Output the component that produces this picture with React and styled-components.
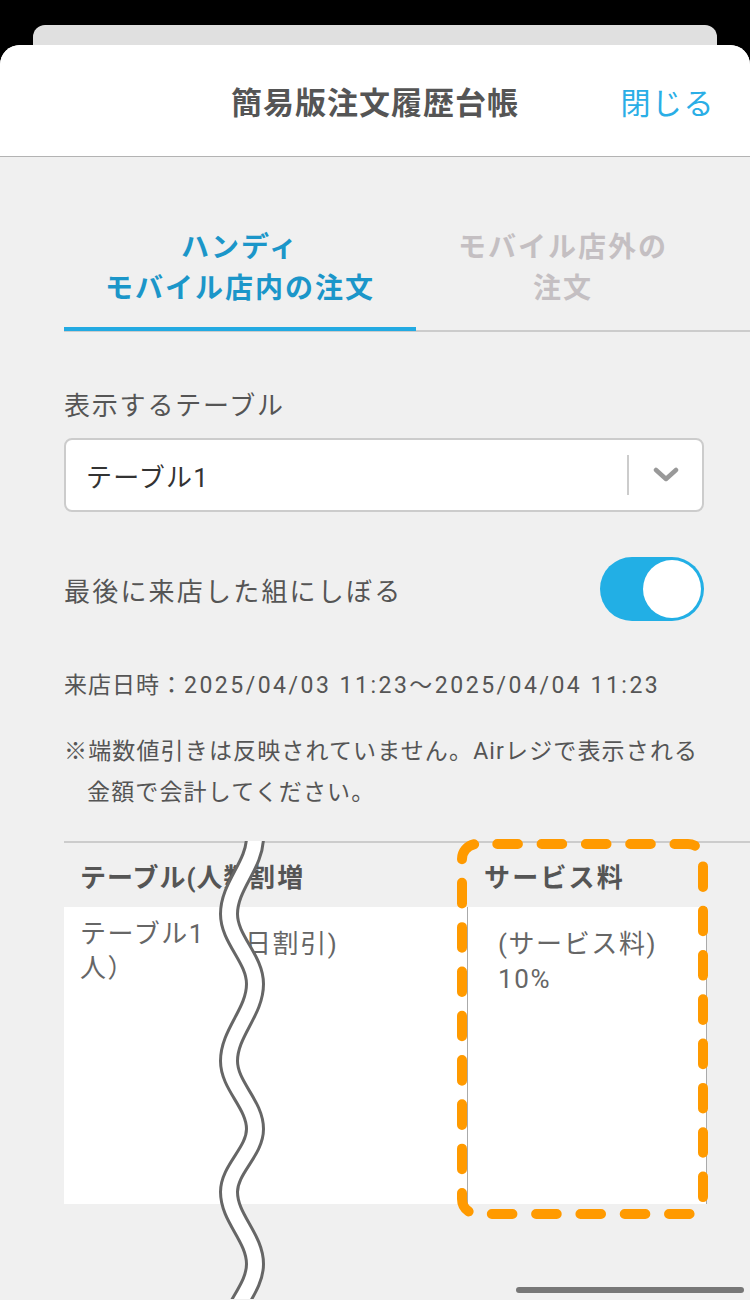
import React from "react";
import styled, { createGlobalStyle } from "styled-components";

const Global = createGlobalStyle`
  html, body { margin: 0; padding: 0; background: #000; }
  body {
    font-family: Roboto, "Noto Sans CJK JP", sans-serif;
    -webkit-font-smoothing: antialiased;
  }
  * { box-sizing: border-box; }
`;

const Page = styled.div`
  position: relative;
  width: 750px;
  height: 1300px;
  overflow: hidden;
  background: #000;
  padding-top: 25px;
`;

const BackCard = styled.div`
  margin: 0 33px;
  height: 20px;
  background: #e0e0e0;
  border-radius: 12px 12px 0 0;
`;

const Sheet = styled.div`
  background: #f0f0f0;
  border-radius: 20px 20px 0 0;
  height: 1255px;
  overflow: hidden;
`;

const Header = styled.header`
  height: 112px;
  background: #fff;
  border-bottom: 1px solid #b3b3b3;
  display: grid;
  grid-template-columns: 1fr auto 1fr;
  align-items: center;
  padding: 0 35px;
`;

const Title = styled.h1`
  grid-column: 2;
  margin: 0;
  font-size: 31px;
  font-weight: 700;
  color: #555;
  letter-spacing: 1px;
`;

const Close = styled.button`
  grid-column: 3;
  justify-self: end;
  border: 0;
  background: none;
  padding: 0;
  font-family: inherit;
  font-size: 30px;
  color: #2aaee6;
  letter-spacing: 1.5px;
`;

const Tabs = styled.div`
  display: flex;
  margin-left: 64px;
  border-bottom: 2px solid #ccc;
`;

const Tab = styled.div`
  width: ${(p) => p.$w}px;
  padding: 70px 0 18px;
  margin-bottom: -1px;
  text-align: center;
  font-size: 28px;
  line-height: 41px;
  font-weight: 700;
  letter-spacing: 2px;
  color: ${(p) => (p.$active ? "#1b96c9" : "#c4bfc2")};
  border-bottom: 4px solid ${(p) => (p.$active ? "#22aae2" : "transparent")};
`;

const Content = styled.div`
  padding: 0 46px 0 64px;
`;

const Label = styled.div`
  margin-top: 54px;
  font-size: 26px;
  line-height: 40px;
  color: #555;
  letter-spacing: 1.8px;
`;

const Select = styled.div`
  margin-top: 12px;
  height: 74px;
  background: #fff;
  border: 2px solid #ccc;
  border-radius: 8px;
  display: flex;
  align-items: center;
`;

const SelectValue = styled.div`
  flex: 1;
  padding-left: 20px;
  font-size: 26px;
  color: #333;
  letter-spacing: 1.2px;
`;

const Separator = styled.div`
  width: 2px;
  height: 40px;
  background: #ccc;
`;

const ChevronBox = styled.div`
  width: 73px;
  display: flex;
  justify-content: center;
  align-items: center;
`;

const ToggleRow = styled.div`
  margin-top: 45px;
  height: 64px;
  display: flex;
  align-items: center;
  justify-content: space-between;
`;

const ToggleLabel = styled.div`
  font-size: 26px;
  color: #555;
  letter-spacing: 2.2px;
`;

const Toggle = styled.div`
  width: 104px;
  height: 64px;
  border-radius: 32px;
  background: #22afe5;
  display: flex;
  align-items: center;
  justify-content: flex-end;
  padding-right: 3px;
`;

const Knob = styled.div`
  width: 58px;
  height: 58px;
  border-radius: 50%;
  background: #fff;
`;

const DateLine = styled.div`
  margin-top: 45px;
  font-size: 23px;
  line-height: 40px;
  color: #555;
  letter-spacing: 1px;
`;

const Stamp = styled.span`
  letter-spacing: 2.5px;
`;

const Note = styled.p`
  margin: 25px 0 0;
  font-size: 23px;
  line-height: 41px;
  color: #555;
  padding-left: 1em;
  text-indent: -1em;
  letter-spacing: 1.15px;
`;

const TableWrap = styled.div`
  position: relative;
  margin: 28px 0 0 64px;
  border-top: 2px solid #ccc;
`;

const Grid = styled.div`
  display: grid;
  grid-template-columns: 176px 227px 240px 1fr;
  grid-template-rows: 64px 297px;
`;

const HeadCell = styled.div`
  display: flex;
  align-items: center;
  padding-left: ${(p) => p.$pl}px;
  font-size: 26px;
  font-weight: 700;
  color: #555;
  letter-spacing: ${(p) => p.$ls ?? 2.2}px;
  white-space: nowrap;
  overflow: hidden;
`;

const BodyCell = styled.div`
  background: ${(p) => (p.$blank ? "transparent" : "#fff")};
  padding: ${(p) => p.$pt || 0}px 0 0 ${(p) => p.$pl || 0}px;
  font-size: 26px;
  line-height: ${(p) => p.$lh || 34}px;
  color: #666;
  letter-spacing: 1.6px;
  white-space: nowrap;
  overflow: hidden;
  border-left: ${(p) => (p.$bordered ? "1px solid #aaa" : "0")};
  border-right: ${(p) => (p.$bordered ? "1px solid #aaa" : "0")};
`;

const Wave = styled.svg`
  position: absolute;
  left: 136px;
  top: -2px;
  pointer-events: none;
`;

const Highlight = styled.svg`
  position: absolute;
  left: 393px;
  top: -4px;
  pointer-events: none;
`;

const HomeIndicator = styled.div`
  position: absolute;
  left: 516px;
  top: 1287px;
  width: 228px;
  height: 6px;
  border-radius: 3px;
  background: #777;
`;

// extremes of the hand-drawn break mark (page coordinates)
const EXTREMES = [
  [255, 838],
  [229, 915],
  [255, 985],
  [229, 1062],
  [255, 1130],
  [229, 1193],
  [255, 1265],
  [229, 1335],
];

function wavePath() {
  const k = 0.3642;
  let d = `M${EXTREMES[0][0]} ${EXTREMES[0][1]}`;
  for (let i = 1; i < EXTREMES.length; i++) {
    const [xa, ya] = EXTREMES[i - 1];
    const [xb, yb] = EXTREMES[i];
    const dy = yb - ya;
    d += ` C${xa} ${ya + k * dy} ${xb} ${yb - k * dy} ${xb} ${yb}`;
  }
  return d;
}

export default function App() {
  const d = wavePath();
  return (
    <>
      <Global />
      <Page>
        <BackCard />
        <Sheet>
          <Header>
            <Title>簡易版注文履歴台帳</Title>
            <Close>閉じる</Close>
          </Header>
          <Tabs>
            <Tab $active $w={352}>
              ハンディ
              <br />
              モバイル店内の注文
            </Tab>
            <Tab $w={294}>
              モバイル店外の
              <br />
              注文
            </Tab>
          </Tabs>
          <Content>
            <Label>表示するテーブル</Label>
            <Select>
              <SelectValue>テーブル1</SelectValue>
              <Separator />
              <ChevronBox>
                <svg width="26" height="16" viewBox="0 0 26 16">
                  <polyline
                    points="3,3 13,12 23,3"
                    fill="none"
                    stroke="#999"
                    strokeWidth="4.5"
                    strokeLinecap="round"
                    strokeLinejoin="round"
                  />
                </svg>
              </ChevronBox>
            </Select>
            <ToggleRow>
              <ToggleLabel>最後に来店した組にしぼる</ToggleLabel>
              <Toggle>
                <Knob />
              </Toggle>
            </ToggleRow>
            <DateLine>
              来店日時：<Stamp>2025/04/03 11:23〜2025/04/04 11:23</Stamp>
            </DateLine>
            <Note>
              ※端数値引きは反映されていません。Airレジで表示される金額で会計してください。
            </Note>
          </Content>
          <TableWrap>
            <Grid>
              <HeadCell $pl={16} $ls={1}>テーブル(人数割増</HeadCell>
              <HeadCell $pl={9}>割増</HeadCell>
              <HeadCell $pl={17}>サービス料</HeadCell>
              <HeadCell $pl={0} />
              <BodyCell $pl={16} $pt={10}>
                テーブル1
                <br />
                人）
              </BodyCell>
              <BodyCell $pl={5} $pt={20} $lh={35}>
                日割引)
              </BodyCell>
              <BodyCell $bordered $pl={30} $pt={20} $lh={35}>
                (サービス料)
                <br />
                10%
              </BodyCell>
              <BodyCell $blank />
            </Grid>
            <Wave width="80" height="458" viewBox="200 842 80 458">
              <path d={d} fill="none" stroke="#666" strokeWidth="20" />
              <path d={d} fill="none" stroke="#fff" strokeWidth="14" />
            </Wave>
            <Highlight width="251" height="380" viewBox="0 0 251 380">
              <rect
                x="5"
                y="5"
                width="241"
                height="370"
                rx="15"
                fill="none"
                stroke="#ff9a00"
                strokeWidth="10"
                strokeLinecap="round"
                strokeDasharray="20.6 23.7"
                strokeDashoffset="24"
              />
            </Highlight>
          </TableWrap>
        </Sheet>
        <HomeIndicator />
      </Page>
    </>
  );
}
